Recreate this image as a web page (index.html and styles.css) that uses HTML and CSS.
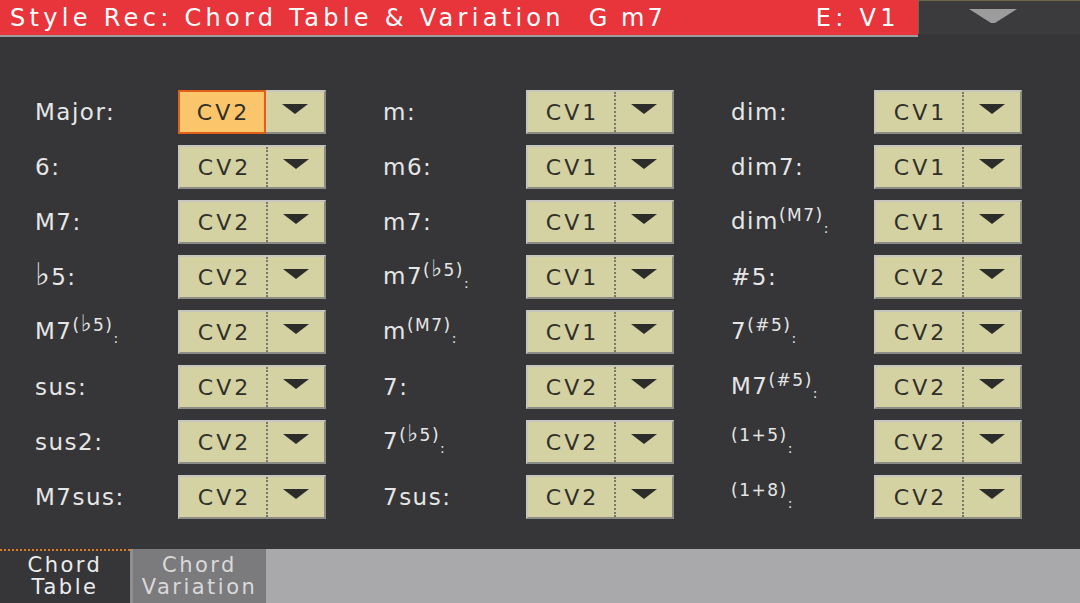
FILE: index.html
```html
<!DOCTYPE html>
<html lang="en">
<head>
    <meta charset="UTF-8">
    <title>Style Rec: Chord Table &amp; Variation</title>
    <link rel="stylesheet" href="styles.css">
</head>
<body>
    <header class="title-bar">
        <div class="title-main">
            <span class="title">Style Rec: Chord Table &amp; Variation</span>
            <span class="chord">G m7</span>
            <span class="element">E: V1</span>
        </div>
        <div class="title-menu">
            <svg width="48" height="14" viewBox="0 0 48 14"><path d="M0 0 H48 L26 14 H22 Z" fill="#9c9c9c"/></svg>
        </div>
    </header>

    <main class="chord-grid">
        <!-- column 1 -->
        <div class="row"><span class="label">Major:</span><div class="combo selected"><span class="value">CV2</span><span class="arrow"></span></div></div>
        <div class="row"><span class="label">6:</span><div class="combo"><span class="value">CV2</span><span class="arrow"></span></div></div>
        <div class="row"><span class="label">M7:</span><div class="combo"><span class="value">CV2</span><span class="arrow"></span></div></div>
        <div class="row"><span class="label"><span class="flat">&#9837;</span>5:</span><div class="combo"><span class="value">CV2</span><span class="arrow"></span></div></div>
        <div class="row"><span class="label">M7<sup>(<span class="flat">&#9837;</span>5)</sup><small>:</small></span><div class="combo"><span class="value">CV2</span><span class="arrow"></span></div></div>
        <div class="row"><span class="label">sus:</span><div class="combo"><span class="value">CV2</span><span class="arrow"></span></div></div>
        <div class="row"><span class="label">sus2:</span><div class="combo"><span class="value">CV2</span><span class="arrow"></span></div></div>
        <div class="row"><span class="label">M7sus:</span><div class="combo"><span class="value">CV2</span><span class="arrow"></span></div></div>

        <!-- column 2 -->
        <div class="row"><span class="label">m:</span><div class="combo"><span class="value">CV1</span><span class="arrow"></span></div></div>
        <div class="row"><span class="label">m6:</span><div class="combo"><span class="value">CV1</span><span class="arrow"></span></div></div>
        <div class="row"><span class="label">m7:</span><div class="combo"><span class="value">CV1</span><span class="arrow"></span></div></div>
        <div class="row"><span class="label">m7<sup>(<span class="flat">&#9837;</span>5)</sup><small>:</small></span><div class="combo"><span class="value">CV1</span><span class="arrow"></span></div></div>
        <div class="row"><span class="label">m<sup>(M7)</sup><small>:</small></span><div class="combo"><span class="value">CV1</span><span class="arrow"></span></div></div>
        <div class="row"><span class="label">7:</span><div class="combo"><span class="value">CV2</span><span class="arrow"></span></div></div>
        <div class="row"><span class="label">7<sup>(<span class="flat">&#9837;</span>5)</sup><small>:</small></span><div class="combo"><span class="value">CV2</span><span class="arrow"></span></div></div>
        <div class="row"><span class="label">7sus:</span><div class="combo"><span class="value">CV2</span><span class="arrow"></span></div></div>

        <!-- column 3 -->
        <div class="row"><span class="label">dim:</span><div class="combo"><span class="value">CV1</span><span class="arrow"></span></div></div>
        <div class="row"><span class="label">dim7:</span><div class="combo"><span class="value">CV1</span><span class="arrow"></span></div></div>
        <div class="row"><span class="label">dim<sup>(M7)</sup><small>:</small></span><div class="combo"><span class="value">CV1</span><span class="arrow"></span></div></div>
        <div class="row"><span class="label">#5:</span><div class="combo"><span class="value">CV2</span><span class="arrow"></span></div></div>
        <div class="row"><span class="label">7<sup>(#5)</sup><small>:</small></span><div class="combo"><span class="value">CV2</span><span class="arrow"></span></div></div>
        <div class="row"><span class="label">M7<sup>(#5)</sup><small>:</small></span><div class="combo"><span class="value">CV2</span><span class="arrow"></span></div></div>
        <div class="row"><span class="label"><sup>(1+5)</sup><small>:</small></span><div class="combo"><span class="value">CV2</span><span class="arrow"></span></div></div>
        <div class="row"><span class="label"><sup>(1+8)</sup><small>:</small></span><div class="combo"><span class="value">CV2</span><span class="arrow"></span></div></div>
    </main>

    <nav class="tab-bar">
        <div class="tab active">Chord<br>Table</div>
        <div class="tab">Chord<br>Variation</div>
    </nav>
</body>
</html>
```

FILE: styles.css
```css
/* Global */
* {
    box-sizing: border-box;
}
body {
    margin: 0;
    width: 1080px;
    height: 603px;
    overflow: hidden;
    background-color: #363639;
    font-family: "DejaVu Sans", sans-serif;
    color: #e4e4e4;
    display: flex;
    flex-direction: column;
}

/* Title bar */
.title-bar {
    display: flex;
    height: 37px;
}
.title-main {
    width: 918px;
    background-color: #e8353b;
    border-bottom: 2px solid #9c9c9c;
    display: flex;
    align-items: center;
    padding-left: 10px;
    font-size: 24px;
    letter-spacing: 4.3px;
    color: #fff;
    white-space: nowrap;
}
.chord {
    margin-left: 24px;
    letter-spacing: 3px;
}
.element {
    margin-left: 150px;
}
.title-menu {
    flex: 1;
    height: 34px;
    background-color: #3b3b3d;
    border-top: 1px solid #6b6a44;
    border-left: 1px solid #6b6a44;
    display: flex;
    justify-content: center;
    padding-top: 8px;
    padding-right: 14px;
}

/* Chord table */
.chord-grid {
    flex: 1;
    display: grid;
    grid-auto-flow: column;
    grid-template-columns: repeat(3, 348px);
    grid-template-rows: repeat(8, 44px);
    row-gap: 11px;
    padding: 53px 0 0 35px;
    align-content: start;
}
.row {
    display: flex;
    align-items: center;
}
.label {
    width: 143px;
    font-size: 23px;
    letter-spacing: 1.5px;
    color: #e6e6e6;
    white-space: nowrap;
}
.label sup {
    font-size: 17px;
    letter-spacing: 1.5px;
    vertical-align: 8px;
    line-height: 0;
}
.label small {
    font-size: 14px;
    vertical-align: -4px;
}
.flat {
    font-size: 1.35em;
    line-height: 0;
}
.combo {
    width: 148px;
    height: 44px;
    display: flex;
    background-color: #d4d1a3;
    border: 2px solid;
    border-color: #c6c6be #8c8c86 #8c8c86 #c6c6be;
}
.value {
    width: 88px;
    display: flex;
    align-items: center;
    justify-content: center;
    font-size: 22px;
    letter-spacing: 3px;
    padding-left: 3px;
    color: #303028;
    border-right: 2px dotted #77776c;
}
.combo.selected .value {
    width: 88px;
    margin: -2px 0 -2px -2px;
    background-color: #fbc66b;
    border: 2px solid #e0601a;
}
.arrow {
    flex: 1;
    display: flex;
    justify-content: center;
    align-items: center;
    padding-bottom: 6px;
}
.arrow::after {
    content: "";
    border-left: 13px solid transparent;
    border-right: 13px solid transparent;
    border-top: 10px solid #2c2c2a;
}

/* Bottom tabs */
.tab-bar {
    height: 54px;
    display: flex;
    background-color: #a9a9ab;
}
.tab {
    width: 136px;
    padding-top: 5px;
    text-align: center;
    font-size: 21px;
    line-height: 22px;
    letter-spacing: 2.5px;
    color: #d9d9d9;
    background-color: #7b7b7d;
    border-left: 3px solid #8f8f91;
}
.tab.active {
    width: 130px;
    background-color: #363639;
    color: #ececec;
    border-left: none;
    border-top: 2px dotted #e07a20;
    padding-top: 3px;
}
```
